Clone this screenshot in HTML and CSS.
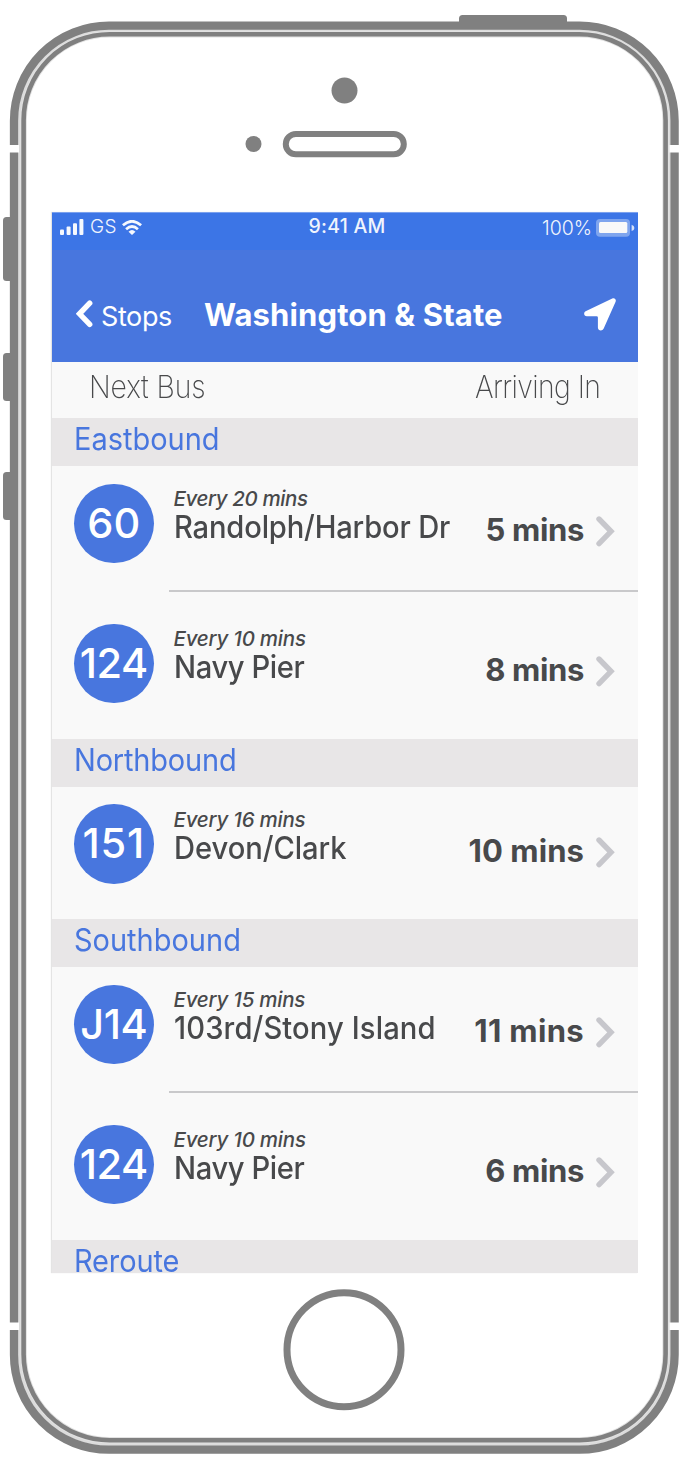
FILE: index.html
```html
<!DOCTYPE html>
<html lang="en">
<head>
<meta charset="utf-8">
<title>Washington &amp; State</title>
<link rel="stylesheet" href="styles.css">
</head>
<body>
<div class="phone">
  <svg class="frame" viewBox="0 0 690 1470" width="690" height="1470" fill="none" aria-hidden="true">
    <g fill="#808080">
      <path d="M459 26V18.500Q459 15 462.500 15H563.500Q567 15 567 18.500V26Z"/>
      <path d="M12 217H6.500Q3 217 3 220.500V277.500Q3 281 6.500 281H12Z"/>
      <path d="M12 353H6.500Q3 353 3 356.500V397.500Q3 401 6.500 401H12Z"/>
      <path d="M12 472H6.500Q3 472 3 475.500V516.500Q3 520 6.500 520H12Z"/>
    </g>
    <rect x="19.500" y="31" width="649.500" height="1413" rx="90" stroke="#dcdcdc" stroke-width="4"/>
    <rect x="14" y="25.700" width="660.600" height="1424" rx="95" stroke="#808080" stroke-width="8.300"/>
    <rect x="23.600" y="34.200" width="642" height="1406" rx="86" stroke="#e2e2e2" stroke-width="6.500"/>
    <rect x="23.600" y="34.200" width="642" height="1406" rx="86" stroke="#808080" stroke-width="4.600"/>
    <g fill="#fff">
      <rect x="8" y="145" width="11" height="7.500"/>
      <rect x="669.500" y="145" width="11" height="7.500"/>
      <rect x="8" y="1322.500" width="11" height="7.500"/>
      <rect x="669.500" y="1322.500" width="11" height="7.500"/>
    </g>
    <circle cx="344.500" cy="90.500" r="13" fill="#808080"/>
    <circle cx="253.500" cy="144" r="8" fill="#808080"/>
    <rect x="285.800" y="134" width="118" height="20.300" rx="10.100" stroke="#808080" stroke-width="6"/>
    <circle cx="344" cy="1349.700" r="57" stroke="#808080" stroke-width="7"/>
  </svg>

  <main class="screen">
    <div class="status">
      <svg class="signal" viewBox="0 0 24 16" width="24" height="16" fill="#f5f8fe"><rect y="10.500" width="4" height="5.500" rx="1"/><rect x="6.600" y="7.500" width="4" height="8.500" rx="1"/><rect x="13" y="4.300" width="4" height="11.700" rx="1"/><rect x="19.400" width="4" height="16" rx="1"/></svg>
      <span class="carrier">GS</span>
      <svg class="wifi" viewBox="0 0 20 15" width="20" height="15" fill="none" stroke="#f5f8fe" stroke-width="2.700"><path d="M.900 5.300Q10-2.800 19.100 5.300"/><path d="M4.100 9.200Q10 3.800 15.900 9.200"/><path d="M6.500 11.700Q10 8.300 13.500 11.700L10 15Z" fill="#f5f8fe" stroke="none"/></svg>
      <span class="clock">9:41 AM</span>
      <span class="charge">100%</span>
      <svg class="battery" viewBox="0 0 39 18" width="39" height="18"><rect width="34" height="17.700" rx="4" fill="#7fa5ee"/><rect x="3" y="3" width="28.300" height="11" rx="1.500" fill="#f9f9f9"/><path d="M35.600 5.800Q38.400 6.500 38.400 8.900T35.600 12Z" fill="#d5e1fa"/></svg>
    </div>
    <header class="nav">
      <svg class="back" viewBox="0 0 17 28" width="17" height="28" fill="none" stroke="#fff" stroke-width="5.400" stroke-linecap="round"><path d="M13.700 3.200L3.500 13.800L13.700 24.400"/></svg>
      <span class="parent">Stops</span>
      <h1 class="title">Washington &amp; State</h1>
      <svg class="locate" viewBox="0 0 32 33" width="32" height="33" fill="#fff"><path d="M28.300.400L1.600 13.300C-.800 14.700-.100 18.200 2.800 18.200H12.600Q13.900 18.200 13.900 19.500V29.500C13.900 32.900 18.400 33.500 19.700 30.500L31.600 3.800C32.500 1.500 30.700-.600 28.300.400Z"/></svg>
    </header>
    <div class="columns"><span class="col-bus">Next Bus</span><span class="col-time">Arriving In</span></div>

    <h2 class="direction"><span>Eastbound</span></h2>
    <div class="route divided"><span class="badge">60</span><div class="detail"><div class="stop"><em class="every e20">Every 20 mins</em><span class="name n-randolph">Randolph/Harbor Dr</span></div><b class="eta">5 mins</b><svg class="more" viewBox="0 0 19 31" width="19" height="31"><path d="M3 3L15 15.300L3 27.600"/></svg></div></div>
    <div class="route after"><span class="badge b3">124</span><div class="detail"><div class="stop"><em class="every">Every 10 mins</em><span class="name n-navy">Navy Pier</span></div><b class="eta">8 mins</b><svg class="more" viewBox="0 0 19 31" width="19" height="31"><path d="M3 3L15 15.300L3 27.600"/></svg></div></div>

    <h2 class="direction north"><span>Northbound</span></h2>
    <div class="route single"><span class="badge b151">151</span><div class="detail"><div class="stop"><em class="every">Every 16 mins</em><span class="name n-devon">Devon/Clark</span></div><b class="eta wide">10 mins</b><svg class="more" viewBox="0 0 19 31" width="19" height="31"><path d="M3 3L15 15.300L3 27.600"/></svg></div></div>

    <h2 class="direction"><span>Southbound</span></h2>
    <div class="route divided"><span class="badge b3">J14</span><div class="detail"><div class="stop"><em class="every">Every 15 mins</em><span class="name n-stony">103rd/Stony Island</span></div><b class="eta eleven">11 mins</b><svg class="more" viewBox="0 0 19 31" width="19" height="31"><path d="M3 3L15 15.300L3 27.600"/></svg></div></div>
    <div class="route after"><span class="badge b3">124</span><div class="detail"><div class="stop"><em class="every">Every 10 mins</em><span class="name n-navy">Navy Pier</span></div><b class="eta">6 mins</b><svg class="more" viewBox="0 0 19 31" width="19" height="31"><path d="M3 3L15 15.300L3 27.600"/></svg></div></div>

    <h2 class="direction cut"><span>Reroute</span></h2>
  </main>
</div>
</body>
</html>
```
FILE: styles.css
```css
* { box-sizing: border-box; }
body {
  margin: 0;
  background: #fff;
  font-family: Inter, "Liberation Sans", sans-serif;
  color: #48494b;
}
h1, h2 { margin: 0; }
svg { display: block; flex: none; }
span, em, b { white-space: nowrap; }

.phone {
  position: relative;
  width: 690px;
  height: 1470px;
  padding: 212px 52px 0;
  overflow: hidden;
}
.frame { position: absolute; left: 0; top: 0; filter: blur(0.6px); }
.screen {
  position: relative;
  width: 586px;
  height: 1061px;
  background: #f9f9f9;
  box-shadow: -1px 0 1px #e4e4e4;
}

.status {
  display: flex;
  align-items: flex-start;
  height: 38px;
  padding-left: 8px;
  background: #3c75e6;
  border-top: 1px solid #7ba1ee;
  color: #f0f4fd;
  line-height: 24px;
}
.signal { margin-top: 6px; }
.carrier { width: 32px; margin: 2px 0 0 6px; font-size: 19px; font-weight: 300; letter-spacing: 0.4px; }
.wifi { margin: 7px 0 0 0; }
.clock { width: 79.500px; margin: 1px 0 0 166.500px; font-size: 19.500px; font-weight: 500; letter-spacing: 0.250px; }
.charge { width: 54px; margin: 3px 0 0 154px; font-size: 19.500px; font-weight: 300; }
.battery { margin-top: 6px; }

.nav {
  display: flex;
  align-items: flex-start;
  height: 112px;
  padding: 44px 0 0 24px;
  background: #4876de;
  color: #fff;
  line-height: 40px;
}
.back { margin-top: 6px; }
.parent { width: 103px; margin: 3px 0 0 8px; font-size: 27px; font-weight: 400; letter-spacing: -0.400px; }
.title { width: 380px; margin-top: 1px; font-size: 31px; font-weight: 700; letter-spacing: 0.120px; white-space: nowrap; }
.locate { margin-top: 3.500px; }

.columns {
  display: flex;
  justify-content: space-between;
  height: 56px;
  padding: 1px 37.500px 0 37px;
  font-size: 31.500px;
  font-weight: 200;
  line-height: 48px;
}
.col-bus { letter-spacing: -0.100px; transform: scaleX(0.9); transform-origin: left; }
.col-time { letter-spacing: -0.650px; transform: scaleX(0.9); transform-origin: right; }

.direction {
  height: 48px;
  padding-left: 22px;
  background: #e8e6e7;
  color: #4876de;
  font-size: 31px;
  font-weight: 400;
  line-height: 41px;
}
.direction span { display: inline-block; transform: scaleX(0.935); transform-origin: left; }
.north { letter-spacing: -0.200px; }
.cut { height: 33px; letter-spacing: -0.150px; }

.route { display: flex; gap: 15.500px; padding-left: 22px; }
.divided { height: 126px; }
.after { height: 147px; }
.single { height: 132px; }
.badge {
  flex: none;
  width: 79.500px;
  height: 79.500px;
  margin-top: 17.500px;
  border-radius: 50%;
  background: #4876de;
  color: #fff;
  font-size: 41.500px;
  font-weight: 500;
  line-height: 79px;
  text-align: center;
}
.single .badge { margin-top: 17.300px; }
.b3 { letter-spacing: -0.500px; }
.b151 { letter-spacing: 0.800px; }
.detail { display: flex; flex: 1; align-items: flex-start; padding: 21.500px 24px 0 4.500px; }
.divided .detail { border-bottom: 2px solid #c9c9cb; }
.after .badge { margin-top: 31.600px; }
.after .detail { padding-top: 36px; }
.stop { display: flex; flex: 1; flex-direction: column; align-items: flex-start; min-width: 0; }
.every { font-size: 20.500px; font-weight: 500; line-height: 22px; letter-spacing: -0.230px; }
.e20 { letter-spacing: -0.400px; }
.name {
  margin: 1px 0 0;
  font-size: 31px;
  font-weight: 500;
  line-height: 32px;
  transform: scaleX(0.94);
  transform-origin: left;
}
.n-randolph { letter-spacing: -0.170px; }
.n-navy { letter-spacing: -0.400px; }
.n-devon { letter-spacing: -0.050px; }
.n-stony { letter-spacing: 0.130px; }
.eta { margin-top: 22px; font-size: 31px; font-weight: 700; line-height: 40px; letter-spacing: -0.350px; }
.wide { letter-spacing: 0.070px; }
.eleven { letter-spacing: 0.320px; }
.more { width: 19px; margin: 28px -0.500px 0 11.500px; fill: none; stroke: #c7c7cc; stroke-width: 5.400; stroke-linecap: round; }
```
